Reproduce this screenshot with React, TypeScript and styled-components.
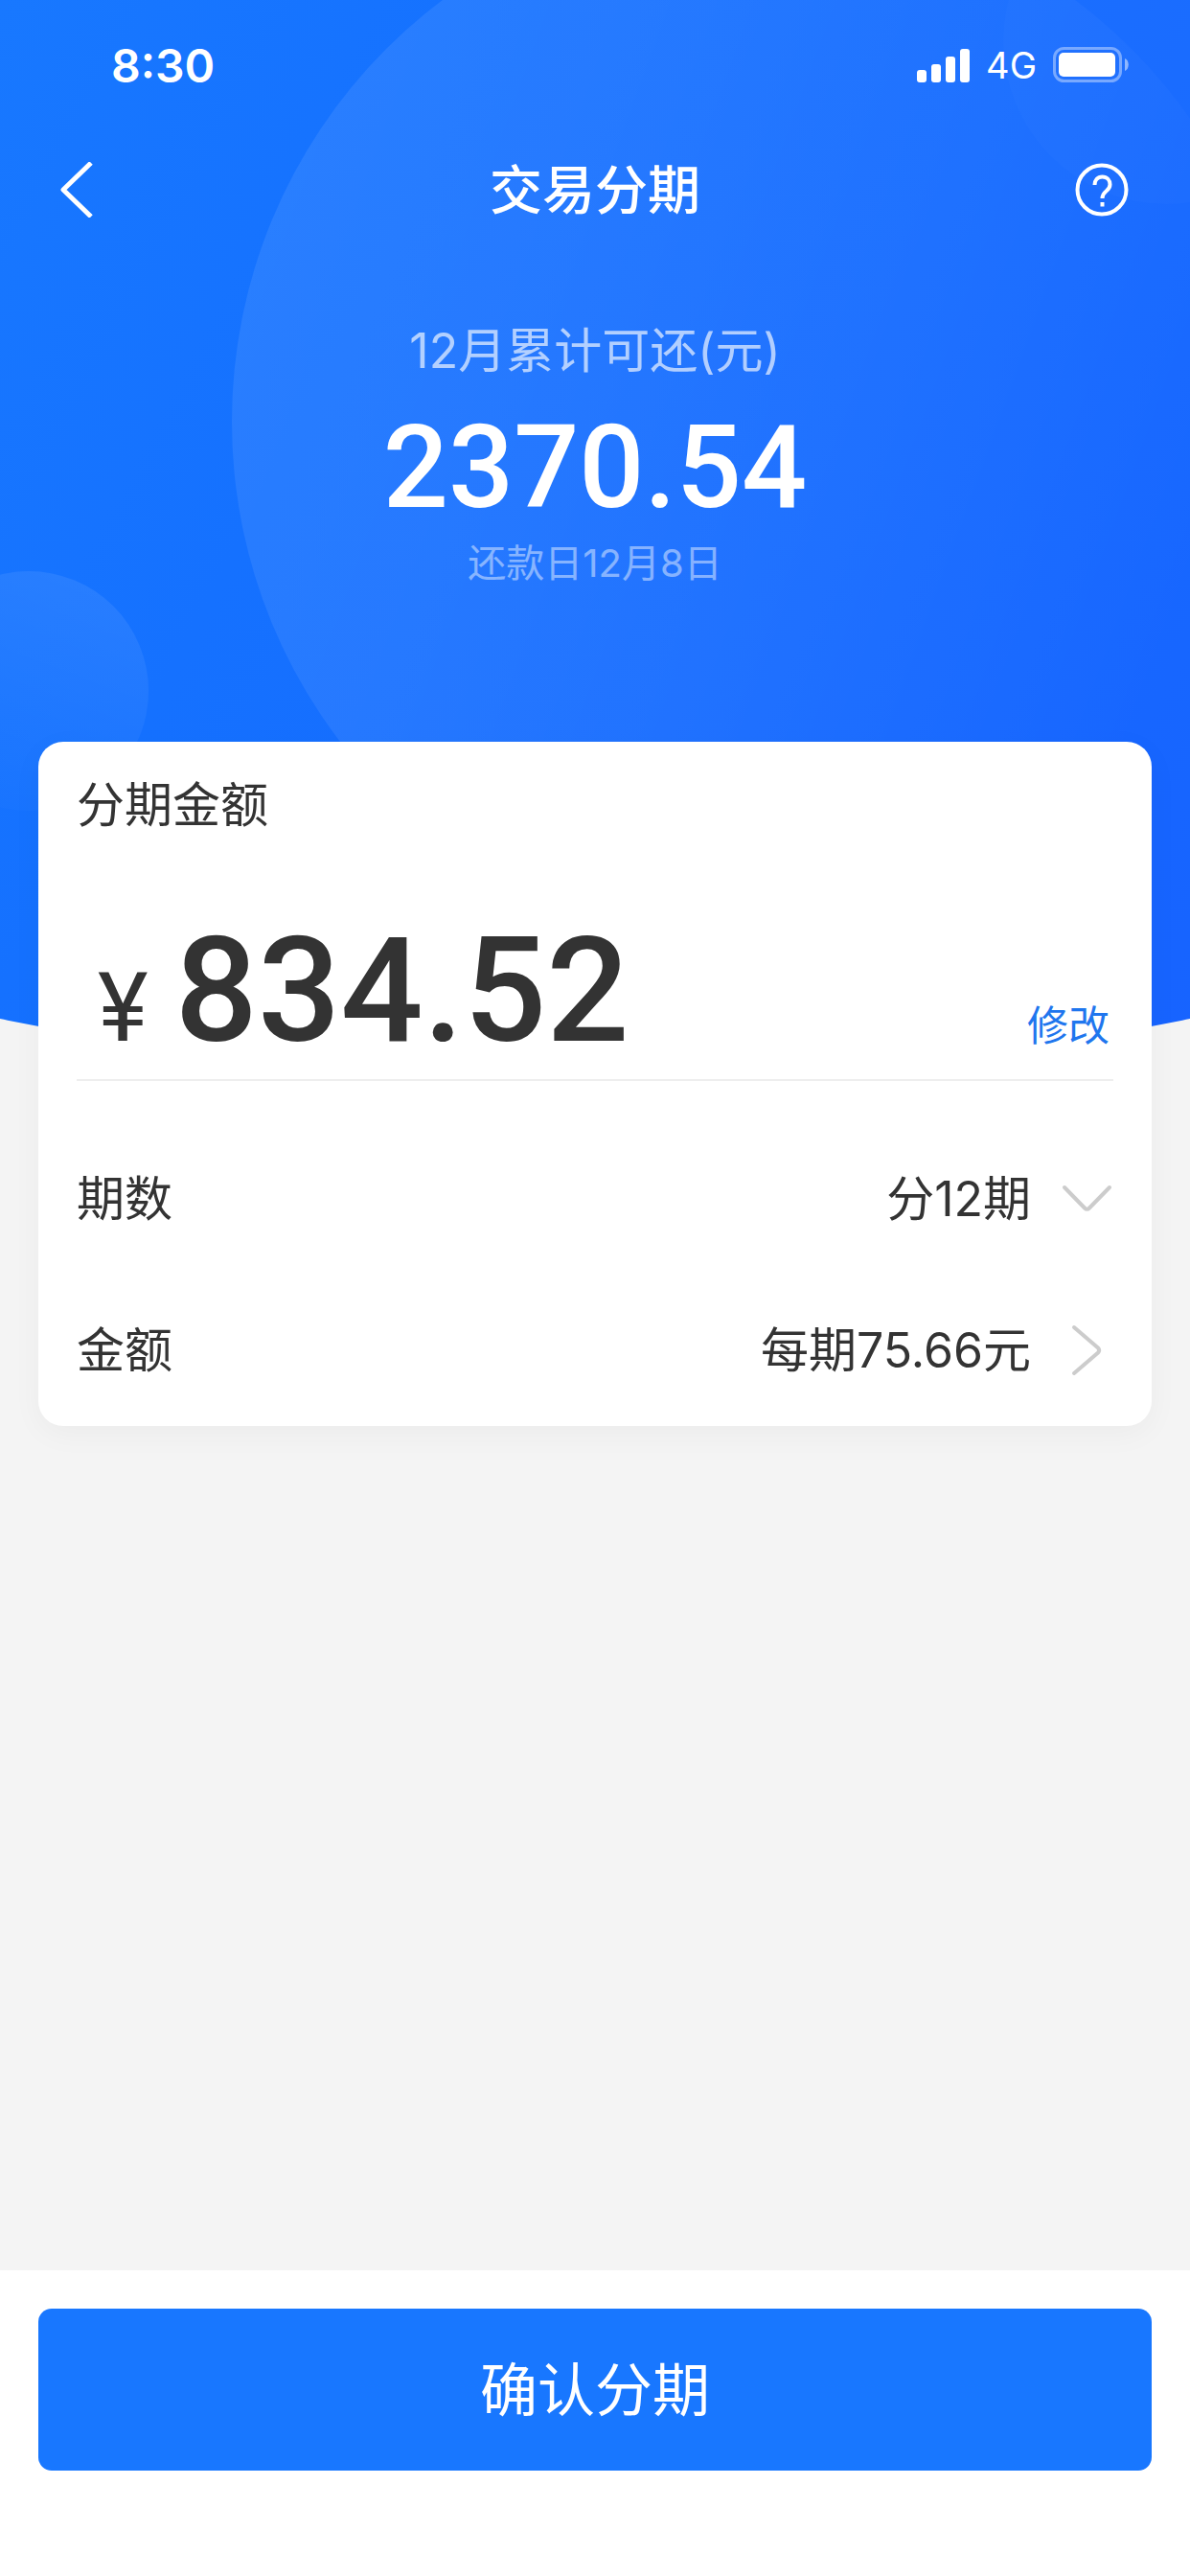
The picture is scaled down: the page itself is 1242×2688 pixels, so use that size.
import React from "react";
import styled, { createGlobalStyle } from "styled-components";

const textFont = `Inter, "Noto Sans CJK SC", "Noto Sans", sans-serif`;
const figureFont = `Roboto, "Noto Sans CJK SC", sans-serif`;

const GlobalStyle = createGlobalStyle`
  *, *::before, *::after { box-sizing: border-box; }
  body {
    margin: 0;
    background: #f4f4f4;
    color: #333;
    font-family: ${textFont};
  }
  h1, h2, p { margin: 0; }
  button, select {
    margin: 0;
    padding: 0;
    border: 0;
    background: none;
    color: inherit;
    font: inherit;
    cursor: pointer;
  }
  a { color: inherit; text-decoration: none; }
  svg { display: block; flex: none; }
`;

const Page = styled.div`
  position: relative;
  isolation: isolate;
  display: flex;
  flex-direction: column;
  min-height: 100vh;
  overflow: hidden;
`;

const Backdrop = styled.div`
  position: absolute;
  z-index: -1;
  inset: 0 0 auto;
  height: 1125px;
  overflow: hidden;
  background: linear-gradient(118deg, #1878ff 0%, #1571ff 30%, #176cff 60%, #1763ff 100%);
  clip-path: ellipse(253% 3141px at 50% -2016px);
`;

const Bubble = styled.div<{ $size: number; $x: string; $y: number; $fill: string }>`
  position: absolute;
  left: ${(p) => p.$x};
  top: ${(p) => p.$y}px;
  width: ${(p) => p.$size}px;
  height: ${(p) => p.$size}px;
  border-radius: 50%;
  background: ${(p) => p.$fill};
`;

const StatusBar = styled.div`
  display: flex;
  align-items: center;
  justify-content: space-between;
  height: 136px;
  padding: 0 64px 0 116px;
  color: #fff;
`;

const Clock = styled.time`
  font-size: 48px;
  font-weight: 600;
`;

const Signals = styled.div`
  display: flex;
  align-items: center;
  gap: 16px;
  font-size: 38px;
`;

const NavBar = styled.header`
  display: grid;
  grid-template-columns: 64px 1fr 64px;
  align-items: center;
  height: 124px;
  padding: 0 60px;
  color: #fff;
`;

const NavButton = styled.button`
  display: flex;
  align-items: center;
  height: 64px;
  &:last-child { justify-content: flex-end; }
`;

const Title = styled.h1`
  font-size: 55px;
  line-height: 64px;
  font-weight: 500;
  text-align: center;
`;

const Summary = styled.section`
  display: flex;
  flex-direction: column;
  align-items: center;
  padding: 76px 40px 162px;
  color: #fff;
`;

const SummaryLabel = styled.h2`
  font-size: 50px;
  line-height: 60px;
  font-weight: 400;
  opacity: 0.65;
`;

const SummaryTotal = styled.p`
  padding: 32px 0 16px;
  font-family: ${figureFont};
  font-size: 120px;
  line-height: 120px;
  font-weight: 500;
`;

const SummaryDue = styled.p`
  font-size: 40px;
  line-height: 48px;
  font-weight: 400;
  opacity: 0.45;
`;

const Card = styled.section`
  margin: 0 40px;
  padding: 36px 40px 0;
  border-radius: 26px;
  background: #fff;
  box-shadow: 0 8px 32px rgba(0, 0, 0, 0.04);
`;

const Label = styled.h2`
  font-size: 50px;
  line-height: 60px;
  font-weight: 400;
`;

const AmountRow = styled.div`
  display: flex;
  align-items: baseline;
  padding: 84px 4px 12px 22px;
  border-bottom: 2px solid #eee;
`;

const Currency = styled.span`
  margin-right: 28px;
  font-family: ${figureFont};
  font-size: 100px;
  line-height: 100px;
`;

const Amount = styled.span`
  flex: 1;
  font-family: ${figureFont};
  font-size: 152px;
  line-height: 160px;
  font-weight: 500;
`;

const EditLink = styled.a`
  color: #1f76ee;
  font-size: 43px;
  line-height: 60px;
`;

const Options = styled.div`
  padding-top: 44px;
`;

const OptionRow = styled.div`
  display: flex;
  align-items: center;
  justify-content: space-between;
  height: 158px;
  font-size: 50px;
  line-height: 60px;
`;

const SelectBox = styled.span`
  display: flex;
  align-items: center;
  gap: 30px;
`;

const TermSelect = styled.select`
  appearance: none;
  width: 300px;
  line-height: 60px;
  text-align-last: right;
`;

const ValueButton = styled.button`
  display: flex;
  align-items: center;
  gap: 30px;
`;

const Footer = styled.footer`
  margin-top: auto;
  padding: 40px 40px 110px;
  background: #fff;
`;

const ConfirmButton = styled.button`
  width: 100%;
  height: 169px;
  border-radius: 14px;
  background: #1877ff;
  color: #fff;
  font-size: 60px;
  line-height: 72px;
`;

const SignalIcon = () => (
  <svg width="56" height="36" viewBox="0 0 56 36" fill="#fff" aria-hidden="true">
    <rect x="0" y="23" width="10" height="13" rx="3" />
    <rect x="15" y="17" width="10" height="19" rx="3" />
    <rect x="30" y="9" width="10" height="27" rx="3" />
    <rect x="45" y="1" width="10" height="35" rx="3" />
  </svg>
);

const BatteryIcon = () => (
  <svg width="80" height="38" viewBox="0 0 80 38" aria-hidden="true">
    <rect x="2.5" y="1.5" width="69" height="34" rx="10" fill="none" stroke="#fff" strokeOpacity="0.4" strokeWidth="3" />
    <rect x="7" y="6" width="59" height="25" rx="5" fill="#fff" />
    <path d="M76 12c5 2 5 11 0 13z" fill="#fff" fillOpacity="0.5" />
  </svg>
);

const BackIcon = () => (
  <svg width="40" height="58" viewBox="0 0 40 58" fill="none" stroke="#fff" strokeWidth="5" strokeLinejoin="round" aria-hidden="true">
    <path d="M35 1L6 29L35 57" />
  </svg>
);

const HelpIcon = () => (
  <svg width="62" height="58" viewBox="0 0 62 58" fill="none" stroke="#fff" strokeWidth="4" aria-hidden="true">
    <circle cx="30" cy="29" r="25.5" />
    <path d="M22.500 24c0-5 3-8.500 8-8.500s8 3.500 8 8c0 3-1.500 5-4 7s-4 3.500-4 7.500" />
    <path d="M30.500 42v4.500" />
  </svg>
);

const DownIcon = () => (
  <svg width="56" height="56" viewBox="0 0 56 56" fill="none" stroke="#ccc" strokeWidth="4" strokeLinecap="round" aria-hidden="true">
    <path d="M5 16L26 37.500Q28.500 40 31 37.500L52 16" />
  </svg>
);

const RightIcon = () => (
  <svg width="56" height="56" viewBox="0 0 56 56" fill="none" stroke="#ccc" strokeWidth="4" strokeLinecap="round" aria-hidden="true">
    <path d="M15 4L40 25.500Q42.500 28 40 30.500L15 52" />
  </svg>
);

export default function App() {
  return (
    <>
      <GlobalStyle />
      <Page>
        <Backdrop>
          <Bubble
            $size={1100}
            $x="calc(50% - 379px)"
            $y={-110}
            $fill="linear-gradient(110deg, rgba(255,255,255,0.09) 0%, rgba(255,255,255,0.07) 30%, rgba(255,255,255,0) 85%)"
          />
          <Bubble
            $size={250}
            $x="-95px"
            $y={596}
            $fill="linear-gradient(200deg, rgba(255,255,255,0.08) 10%, rgba(255,255,255,0.01) 90%)"
          />
          <Bubble
            $size={340}
            $x="calc(100% - 195px)"
            $y={-127}
            $fill="rgba(255,255,255,0.015)"
          />
        </Backdrop>

        <StatusBar>
          <Clock>8:30</Clock>
          <Signals>
            <SignalIcon />
            <span>4G</span>
            <BatteryIcon />
          </Signals>
        </StatusBar>

        <NavBar>
          <NavButton type="button" aria-label="返回">
            <BackIcon />
          </NavButton>
          <Title>交易分期</Title>
          <NavButton type="button" aria-label="帮助">
            <HelpIcon />
          </NavButton>
        </NavBar>

        <main>
          <Summary>
            <SummaryLabel>12月累计可还(元)</SummaryLabel>
            <SummaryTotal>2370.54</SummaryTotal>
            <SummaryDue>还款日12月8日</SummaryDue>
          </Summary>

          <Card>
            <Label>分期金额</Label>
            <AmountRow>
              <Currency>¥</Currency>
              <Amount>834.52</Amount>
              <EditLink href="#edit">修改</EditLink>
            </AmountRow>
            <Options>
              <OptionRow>
                <label htmlFor="term">期数</label>
                <SelectBox>
                  <TermSelect id="term" defaultValue="12">
                    <option value="12">分12期</option>
                  </TermSelect>
                  <DownIcon />
                </SelectBox>
              </OptionRow>
              <OptionRow>
                <span id="per-term">金额</span>
                <ValueButton type="button" aria-describedby="per-term">
                  每期75.66元
                  <RightIcon />
                </ValueButton>
              </OptionRow>
            </Options>
          </Card>
        </main>

        <Footer>
          <ConfirmButton type="button">确认分期</ConfirmButton>
        </Footer>
      </Page>
    </>
  );
}
